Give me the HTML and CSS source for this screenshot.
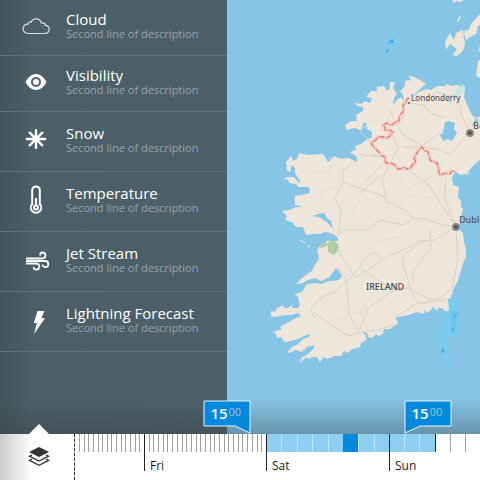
FILE: index.html
```html
<!DOCTYPE html>
<html lang="en">
<head>
<meta charset="utf-8">
<meta name="viewport" content="width=device-width, initial-scale=1">
<title>Weather map</title>
<link rel="stylesheet" href="styles.css">
</head>
<body>
<main class="stage">
  <nav class="layers" aria-label="Map layers">
    <ul class="layer-list">
      <li><button class="layer layer-compact" type="button">
        <svg class="icon" viewBox="0 0 32 32" aria-hidden="true"><path class="line" d="M8.500 23.500C5.500 23.500 3 21.400 3 18.600C3 15.800 5.400 14 8 14.200C8.300 12.300 9.900 11.600 11.300 12.100C12 9.900 14 8.900 16 8.900C18.800 8.900 20.800 10.600 21.300 13C24.300 12.600 25.300 14.200 25.500 15.300C27.800 15.200 29.200 17.100 29.200 19.100C29.200 21.700 27.300 23.500 24.800 23.500Z"/></svg>
        <span class="text"><span class="title">Cloud</span><span class="desc">Second line of description</span></span>
      </button></li>
      <li><button class="layer layer-compact" type="button">
        <svg class="icon" viewBox="0 0 32 32" aria-hidden="true"><path class="fill" fill-rule="evenodd" d="M5.500 16C8 11 12 8 16 8S24 11 26.500 16C24 21 20 24 16 24S8 21 5.500 16ZM16 11A5 5 0 1 0 16 21A5 5 0 1 0 16 11ZM16 13A3 3 0 1 1 16 19A3 3 0 1 1 16 13Z"/></svg>
        <span class="text"><span class="title">Visibility</span><span class="desc">Second line of description</span></span>
      </button></li>
      <li><button class="layer" type="button">
        <svg class="icon" viewBox="0 0 32 32" aria-hidden="true"><path class="spokes" d="M16 6.200V23.800M6.800 15H25.200M9.700 8.700L22.300 21.300M22.300 8.700L9.700 21.300"/></svg>
        <span class="text"><span class="title">Snow</span><span class="desc">Second line of description</span></span>
      </button></li>
      <li><button class="layer" type="button">
        <svg class="icon" viewBox="0 0 32 32" aria-hidden="true"><path class="tube" d="M12.200 20V6.200A3.800 3.800 0 0 1 19.800 6.200V20A5.200 5.200 0 1 1 12.200 20Z"/><path class="tube" d="M16 14V22"/><circle class="fill" cx="16" cy="23.600" r="3"/><circle class="hollow" cx="16" cy="23.600" r="1"/></svg>
        <span class="text"><span class="title">Temperature</span><span class="desc">Second line of description</span></span>
      </button></li>
      <li><button class="layer" type="button">
        <svg class="icon" viewBox="0 0 32 32" aria-hidden="true"><path class="wind" d="M6 14.500H22C26.500 14.500 26.500 8.500 22.600 8.500C20.700 8.500 20 9.800 20.200 11.500M6 17H25C29.500 17 29.300 23 25.500 23C23.500 23 22.700 21.800 22.900 20.500M6 19.500H16.400C20.500 19.500 20.300 25.700 16.500 25.700C14.500 25.700 13.500 24.300 13.800 23"/></svg>
        <span class="text"><span class="title">Jet Stream</span><span class="desc">Second line of description</span></span>
      </button></li>
      <li><button class="layer" type="button">
        <svg class="icon" viewBox="0 0 32 32" aria-hidden="true"><path class="fill" d="M17.500 7H24.500L21.300 14.300H25L14 30L16.900 19H13.800Z"/></svg>
        <span class="text"><span class="title">Lightning Forecast</span><span class="desc">Second line of description</span></span>
      </button></li>
    </ul>
  </nav>
  <section class="map" aria-label="Map of Ireland">
    <svg class="map-art" viewBox="227 0 253 434" preserveAspectRatio="xMidYMid slice">
      <g class="land">
        <path d="M407 73L409 76L414 77L420 80L426 84L420 89L415 94L412 98L419 92L426 89L431 90L437 86L445 86L446 84L452 86L457 85L465 87L464 97L468 107L472 115L476 118L484 115V157L476 163L468 171L466 177L471 170L466 174L460 175L455 171L452 178L453 185L459 187L458 197L461 201L461 207L463 209L461 217L460 225L460 230L463 233L464 242L466 250L466 257L463 263L461 270L458 281L453 290L451 298L448 299L452 307L450 312L445 311L442 308L438 308L437 311L433 307L430 311L426 313L425 308L424 314L417 312L409 315L403 316L395 318L398 322L396 325L390 329L384 329L383 334L378 336L376 334L372 338L368 337L367 333L361 332L366 335L366 340L361 343L360 347L353 349L347 353L344 351L341 356L335 356L327 359L324 357L320 362L317 357L312 357L308 359L306 357L300 363L301 358L308 354L313 349L315 345L307 347L302 352L296 350L289 353L287 352L292 347L298 344L303 339L309 337L310 334L304 336L298 339L291 341L285 342L281 337L277 338L276 334L273 332L278 330L282 330L280 327L287 323L294 319L301 316L298 313L291 315L286 315L280 316L274 317L271 316L271 311L275 312L277 308L280 307L283 305L284 308L288 308L292 305L292 308L298 308L300 305L298 297L294 294L302 292L307 284L316 283L321 284L330 281L339 280L342 276L337 268L333 272L330 277L321 281L315 278L308 280L303 283L296 284L302 278L307 274L312 271L316 263L319 259L317 249L322 244L327 241L332 241L338 241L338 238L333 234L326 232L319 234L313 234L306 235L303 227L296 227L292 222L285 220L287 216L282 211L289 210L296 207L303 207L295 205L295 196L301 195L310 193L309 187L298 187L296 184L290 183L287 179L282 179L288 177L294 177L299 183L300 181L295 173L295 168L292 165L290 172L287 171L286 162L291 156L293 161L297 159L299 153L308 155L323 154L328 162L331 160L334 156L341 159L349 158L357 162L357 157L350 152L356 150L355 146L361 144L366 140L372 137L372 132L367 129L366 122L363 124L361 130L354 128L347 130L345 125L351 121L357 121L356 115L363 111L363 107L357 106L355 103L361 104L365 101L370 103L372 98L366 97L371 91L377 91L377 87L384 86L387 91L390 88L390 82L395 82L393 88L397 94L394 98L393 105L397 100L401 97L404 101L403 95L400 91L405 86L405 81L411 80Z"/>
        <path d="M453 0H464L460 2L457 1L453 3ZM457 21L460 15L461 17L458 22ZM484 9V22L478 26L476 34L470 37L466 40L464 34L465 30L468 31L471 24L479 15ZM456 33L463 30L464 38L465 44L463 51L457 56L452 55L457 49L450 44L446 50L445 42L450 33L454 40ZM484 58L478 61L476 76L484 80ZM480 46L478 51H481ZM300 241L307 244L306 243L301 240ZM307 245L310 246L309 248Z"/>
      </g>
      <path class="water" d="M445 122L450 121L455 123L454 129L457 133L452 141L448 139L443 141L440 135L443 133ZM312 216L318 214L324 213L327 218L331 221L333 229L329 224L325 221L319 217ZM476 118L472 126L479 121Z"/>
      <g class="road">
        <path d="M300 352L310 345M313 312L331 325L349 336L361 332L376 330L397 324M311 312L311 308L320 298L336 291L354 275L364 260L374 252L382 259M312 313L315 319M346 280L349 314L359 332L368 308L394 290L402 288M346 280L340 270L334 268M355 278L391 255L410 247L420 241L435 240L456 227M344 230L367 230L380 220L403 225L414 218L425 219L440 224L456 227L428 184L408 170M344 230L338 236L341 211L335 198L343 182L343 170L358 160M343 182L364 190L382 195L387 202L405 210L414 218M358 154L380 157M372 143L360 131M366 180L388 160L372 154M380 176L360 193M386 197L382 178L398 148L387 121M402 147L420 147L440 133M423 147L402 134L390 110M423 147L440 150L451 155L469 132M422 108L436 91L459 100L462 117L470 132M407 103L423 105L434 115L445 118M446 171L445 200L456 227L458 260L452 288L440 298L419 304L412 294L403 264L403 255L426 240M415 304L395 318M419 304L445 300M431 300L408 288L390 292M430 230L431 248L414 269L413 283M360 268L379 281L403 290M354 275L343 260L338 245"/>
        <path class="minor" d="M331 157L329 171L308 174M323 191L340 184M360 200L353 210L357 218L344 228M320 190L324 203L334 212M311 199L303 207M397 207L410 196L431 198M437 154L444 167L439 190L452 207L456 227M367 313L351 313L337 321M372 296L360 313L368 330M320 300L328 308M376 118L360 130M400 179L407 190L432 176M380 241L404 236L413 248"/>
      </g>
      <path class="park" d="M319 249L324 241L329 245ZM328 243L333 240L338 244L338 251L334 255L328 252Z"/>
      <path class="coastal-mist" d="M464 84L458 87L454 94L449 95L452 98L459 95L463 92ZM449 99L453 102L450 106L448 102Z"/>
      <path class="rain" d="M387 33L393 31L392 35L388 36ZM390 38L395 39L397 45L391 47L389 52V59L387 55L383 53L385 48L391 45ZM448 299L452 300L455 297L456 302L459 304L457 318L458 333L453 337L448 335L447 345L449 354L450 363L453 374L449 369L446 362L442 360L443 346L439 346V340L436 338L437 334L442 331L443 313L449 310ZM403 384H405V386H403ZM438 51H440V53H438Z"/>
      <path class="rain-core" d="M390 40L393 39L394 43H389ZM385 50L389 49L387 54ZM453 314L457 313L456 318L453 317ZM452 327L454 327V333L452 331ZM442 348L444 349V353L441 352Z"/>
      <path class="rain-edge" d="M451 311L453 309L459 312L456 322L455 335L451 332Z"/>
      <path class="border-glow" d="M409 98L403 105L403 113L399 121L392 125L387 123L383 125L385 130L393 132L387 138L378 137L371 143L378 151L385 157L386 163L395 165L400 169L410 169L415 162L415 155L422 147L428 152L430 160L437 163L440 175L450 172L455 171"/>
      <path class="border-line" d="M409 98L407 99L406 103L403 105L404 110L402 113L399 116L399 121L395 122L392 125L388 124L387 123L383 125L385 127L385 130L389 130L393 132L390 136L387 138L383 137L378 137L376 140L371 143L374 148L378 151L380 155L385 157L385 161L386 163L391 163L395 165L397 169L400 169L404 167L407 169L411 168L412 165L416 162L414 159L416 155L418 151L422 147L425 151L428 152L429 156L430 160L434 162L437 163L438 168L440 175L445 173L450 174L452 171L455 171"/>
      <circle class="town" cx="409" cy="103" r="1"/>
      <g class="city"><circle cx="470" cy="133" r="3"/><circle cx="456" cy="227" r="3"/></g>
      <g class="place">
        <text x="411" y="101">Londonderry</text>
        <text class="place-city" x="473" y="129">Belfast</text>
        <text class="place-city" x="459" y="223">Dublin</text>
        <text class="place-country" x="366" y="290">IRELAND</text>
      </g>
    </svg>
  </section>
</main>
<footer class="timeline">
  <button class="layers-toggle" type="button" aria-label="Layers">
    <svg viewBox="0 0 22 22" aria-hidden="true"><path class="sheet-top" d="M11 1L21 6L11 11L1 6Z"/><path class="sheet" d="M4 8.800L1.500 10.200L11 15L20.500 10.200L18 8.800M4 13L1.500 14.400L11 19.300L20.500 14.400L18 13"/></svg>
  </button>
  <div class="track">
    <section class="day day-thu">
      <div class="ticks"><i></i><i></i><i></i><i></i><i></i><i></i><i></i><i></i><i></i><i></i><i></i><i></i><i></i><i></i></div>
    </section>
    <section class="day day-marked">
      <div class="ticks"><i></i><i></i><i></i><i></i><i></i><i></i><i></i><i></i><i></i><i></i><i></i><i></i><i></i><i></i><i></i><i></i><i></i><i></i><i></i><i></i><i></i><i></i><i></i><i></i><i></i><i></i></div>
      <span class="day-name">Fri</span>
      <div class="flag flag-start"><svg viewBox="0 0 48 34" aria-hidden="true"><path d="M1 1H47V33L32 26H1Z"/></svg><span class="hour">15</span><span class="minute">00</span></div>
    </section>
    <section class="day day-marked">
      <div class="ticks"><i class="on"></i><i class="on"></i><i class="on"></i><i class="on"></i><i class="on"></i><i class="now"></i><i class="on"></i><i class="on"></i></div>
      <span class="day-name">Sat</span>
    </section>
    <section class="day day-marked">
      <div class="ticks"><i class="on"></i><i class="on"></i><i class="on"></i><i class="end"></i><i></i><i></i></div>
      <span class="day-name">Sun</span>
      <div class="flag flag-end"><svg viewBox="0 0 48 34" aria-hidden="true"><path d="M1 1H47V26H16L1 33Z"/></svg><span class="hour">15</span><span class="minute">00</span></div>
    </section>
  </div>
</footer>
</body>
</html>
```
FILE: styles.css
```css
* {
  box-sizing: border-box;
}

body {
  margin: 0;
  height: 100vh;
  display: grid;
  grid-template-rows: minmax(0, 1fr) auto;
  overflow: hidden;
  font-family: "Open Sans", "Noto Sans", sans-serif;
  background: #fff;
}

button {
  margin: 0;
  padding: 0;
  border: 0;
  background: none;
  font: inherit;
  color: inherit;
  cursor: pointer;
}

.stage {
  position: relative;
  display: flex;
  min-height: 0;
}

.stage::after {
  content: "";
  position: absolute;
  inset: auto 0 0;
  height: 36px;
  background: linear-gradient(rgba(50, 60, 65, 0), rgba(50, 60, 65, 0.36));
  pointer-events: none;
}

.layers {
  flex: 0 0 227px;
  background: linear-gradient(90deg, #42555b, #4c5f68 32px, #4d6069);
  color: #fff;
}

.layer-list {
  list-style: none;
  margin: 0;
  padding: 0;
}

.layer {
  display: flex;
  align-items: center;
  gap: 14px;
  width: 100%;
  height: 60px;
  padding: 0 20px 3px;
  border-bottom: 1px solid #5f727b;
  text-align: left;
}

.layer-compact {
  height: 56px;
}

.icon {
  flex: none;
  width: 32px;
  height: 32px;
  fill: none;
}

.fill {
  fill: #fff;
}

.hollow {
  fill: #4c5f68;
}

.line {
  stroke: #dce2e4;
  stroke-width: 1.2;
}

.spokes {
  stroke: #fff;
  stroke-width: 2.4;
  stroke-linecap: round;
}

.tube {
  stroke: #fff;
  stroke-width: 2;
}

.wind {
  stroke: #fff;
  stroke-width: 1.8;
}

.text {
  display: grid;
  white-space: nowrap;
}

.title {
  font-size: 15px;
  font-weight: 500;
  line-height: 16px;
}

.desc {
  font-size: 11px;
  line-height: 14px;
  color: #98a4a9;
}

.map {
  flex: 1;
  min-width: 0;
  background: #86c5e6;
}

.map-art {
  display: block;
  width: 100%;
  height: 100%;
}

.land {
  fill: #eee6da;
}

.water {
  fill: #86c5e6;
}

.park {
  fill: #b0cea1;
}

.coastal-mist {
  fill: #c3e5df;
}

.rain {
  fill: #7accee;
}

.rain-edge {
  fill: #62c0f0;
  opacity: 0.6;
}

.rain-core {
  fill: #42b0ee;
}

.road {
  fill: none;
  stroke: #d9d2c8;
  stroke-width: 1;
  stroke-linejoin: round;
}

.minor {
  stroke: #e5ddd2;
}

.border-glow {
  fill: none;
  stroke: #f1d3c9;
  stroke-width: 4;
  stroke-linejoin: round;
}

.border-line {
  fill: none;
  stroke: #e5766d;
  stroke-width: 1.3;
  stroke-dasharray: 5 1 1 1;
}

.town {
  fill: #666;
}

.city {
  fill: #555;
  stroke: #8b8885;
  stroke-width: 2;
}

.place {
  font-family: "Noto Sans", sans-serif;
  font-size: 8px;
  font-weight: 500;
  fill: #555;
}

.place-city {
  font-size: 9px;
}

.place-country {
  font-size: 9px;
  font-weight: 500;
  fill: #444;
}

.timeline {
  position: relative;
  display: flex;
  height: 46px;
  background: #fff;
}

.layers-toggle {
  position: relative;
  flex: 0 0 75px;
  display: grid;
  place-items: center;
  padding-left: 3px;
  border-right: 1px dashed #333;
  background: linear-gradient(90deg, #ccc, #fff 32px);
}

.layers-toggle::before {
  content: "";
  position: absolute;
  left: 29px;
  bottom: 100%;
  width: 20px;
  height: 10px;
  background: #fff;
  clip-path: polygon(50% 0, 100% 100%, 0 100%);
}

.layers-toggle svg {
  width: 22px;
  height: 22px;
}

.sheet-top {
  fill: #333;
}

.sheet {
  fill: none;
  stroke: #333;
  stroke-width: 1.3;
}

.track {
  flex: 1;
  min-width: 0;
  display: grid;
  grid-template-columns: 69fr 122fr 123fr 91fr;
}

.day {
  position: relative;
  min-width: 0;
}

.day-thu {
  padding-left: 4px;
}

.day-marked::before {
  content: "";
  position: absolute;
  left: 0;
  top: 0;
  width: 1px;
  height: 37px;
  background: #222;
}

.ticks {
  display: flex;
  height: 18px;
}

.ticks i {
  flex: 1;
  border-left: 1px solid #a0a0a0;
}

.ticks .on {
  background: #8dcef2;
  border-color: #c3e6f9;
}

.ticks .now {
  background: #0089df;
  border-color: #0089df;
}

.ticks .end {
  border-color: #222;
}

.day-name {
  display: block;
  padding: 5px 0 0 6px;
  font-size: 12px;
  font-weight: 500;
  line-height: 18px;
  color: #222;
}

.flag {
  position: absolute;
  bottom: 100%;
  display: flex;
  gap: 1px;
  width: 48px;
  height: 34px;
  padding: 4px 0 0 7px;
  color: #fff;
}

.flag-start {
  right: 12%;
}

.flag-end {
  left: 17%;
}

.flag svg {
  position: absolute;
  inset: 0;
  fill: #0089df;
  stroke: #e6f5fd;
  stroke-width: 1;
}

.hour,
.minute {
  position: relative;
}

.hour {
  font-size: 15px;
  font-weight: 600;
  line-height: 18px;
}

.minute {
  font-size: 11px;
  line-height: 15px;
  color: #a9bfcc;
}
```
